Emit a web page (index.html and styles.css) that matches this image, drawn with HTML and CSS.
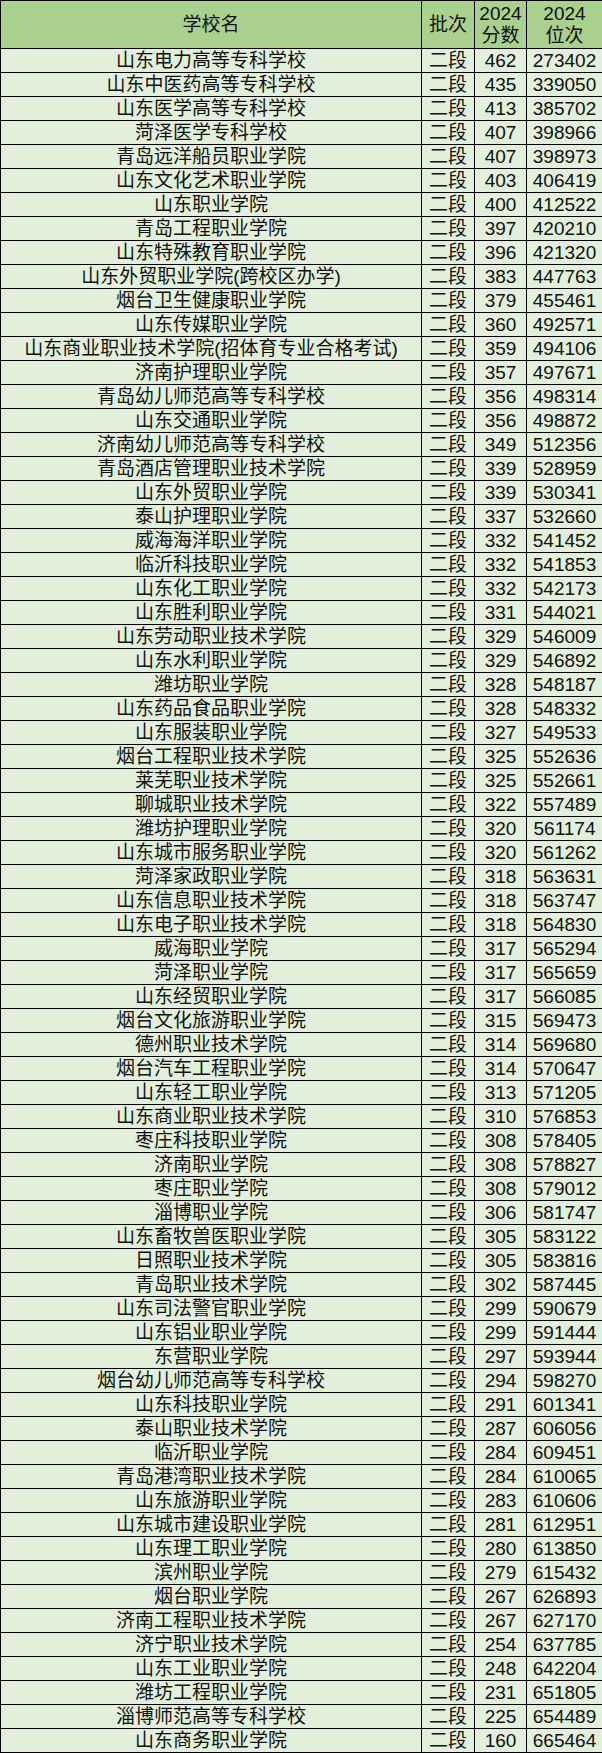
FILE: index.html
```html
<!DOCTYPE html>
<html lang="zh">
<head>
<meta charset="utf-8">
<link rel="stylesheet" href="styles.css">
</head>
<body>
<table class="tbl">
<colgroup><col class="c1"><col class="c2"><col class="c3"><col class="c4"></colgroup>
<thead>
<tr class="head"><th>学校名</th><th>批次</th><th>2024<br>分数</th><th>2024<br>位次</th></tr>
</thead>
<tbody>
<tr><td>山东电力高等专科学校</td><td>二段</td><td>462</td><td>273402</td></tr>
<tr><td>山东中医药高等专科学校</td><td>二段</td><td>435</td><td>339050</td></tr>
<tr><td>山东医学高等专科学校</td><td>二段</td><td>413</td><td>385702</td></tr>
<tr><td>菏泽医学专科学校</td><td>二段</td><td>407</td><td>398966</td></tr>
<tr><td>青岛远洋船员职业学院</td><td>二段</td><td>407</td><td>398973</td></tr>
<tr><td>山东文化艺术职业学院</td><td>二段</td><td>403</td><td>406419</td></tr>
<tr><td>山东职业学院</td><td>二段</td><td>400</td><td>412522</td></tr>
<tr><td>青岛工程职业学院</td><td>二段</td><td>397</td><td>420210</td></tr>
<tr><td>山东特殊教育职业学院</td><td>二段</td><td>396</td><td>421320</td></tr>
<tr><td>山东外贸职业学院(跨校区办学)</td><td>二段</td><td>383</td><td>447763</td></tr>
<tr><td>烟台卫生健康职业学院</td><td>二段</td><td>379</td><td>455461</td></tr>
<tr><td>山东传媒职业学院</td><td>二段</td><td>360</td><td>492571</td></tr>
<tr><td>山东商业职业技术学院(招体育专业合格考试)</td><td>二段</td><td>359</td><td>494106</td></tr>
<tr><td>济南护理职业学院</td><td>二段</td><td>357</td><td>497671</td></tr>
<tr><td>青岛幼儿师范高等专科学校</td><td>二段</td><td>356</td><td>498314</td></tr>
<tr><td>山东交通职业学院</td><td>二段</td><td>356</td><td>498872</td></tr>
<tr><td>济南幼儿师范高等专科学校</td><td>二段</td><td>349</td><td>512356</td></tr>
<tr><td>青岛酒店管理职业技术学院</td><td>二段</td><td>339</td><td>528959</td></tr>
<tr><td>山东外贸职业学院</td><td>二段</td><td>339</td><td>530341</td></tr>
<tr><td>泰山护理职业学院</td><td>二段</td><td>337</td><td>532660</td></tr>
<tr><td>威海海洋职业学院</td><td>二段</td><td>332</td><td>541452</td></tr>
<tr><td>临沂科技职业学院</td><td>二段</td><td>332</td><td>541853</td></tr>
<tr><td>山东化工职业学院</td><td>二段</td><td>332</td><td>542173</td></tr>
<tr><td>山东胜利职业学院</td><td>二段</td><td>331</td><td>544021</td></tr>
<tr><td>山东劳动职业技术学院</td><td>二段</td><td>329</td><td>546009</td></tr>
<tr><td>山东水利职业学院</td><td>二段</td><td>329</td><td>546892</td></tr>
<tr><td>潍坊职业学院</td><td>二段</td><td>328</td><td>548187</td></tr>
<tr><td>山东药品食品职业学院</td><td>二段</td><td>328</td><td>548332</td></tr>
<tr><td>山东服装职业学院</td><td>二段</td><td>327</td><td>549533</td></tr>
<tr><td>烟台工程职业技术学院</td><td>二段</td><td>325</td><td>552636</td></tr>
<tr><td>莱芜职业技术学院</td><td>二段</td><td>325</td><td>552661</td></tr>
<tr><td>聊城职业技术学院</td><td>二段</td><td>322</td><td>557489</td></tr>
<tr><td>潍坊护理职业学院</td><td>二段</td><td>320</td><td>561174</td></tr>
<tr><td>山东城市服务职业学院</td><td>二段</td><td>320</td><td>561262</td></tr>
<tr><td>菏泽家政职业学院</td><td>二段</td><td>318</td><td>563631</td></tr>
<tr><td>山东信息职业技术学院</td><td>二段</td><td>318</td><td>563747</td></tr>
<tr><td>山东电子职业技术学院</td><td>二段</td><td>318</td><td>564830</td></tr>
<tr><td>威海职业学院</td><td>二段</td><td>317</td><td>565294</td></tr>
<tr><td>菏泽职业学院</td><td>二段</td><td>317</td><td>565659</td></tr>
<tr><td>山东经贸职业学院</td><td>二段</td><td>317</td><td>566085</td></tr>
<tr><td>烟台文化旅游职业学院</td><td>二段</td><td>315</td><td>569473</td></tr>
<tr><td>德州职业技术学院</td><td>二段</td><td>314</td><td>569680</td></tr>
<tr><td>烟台汽车工程职业学院</td><td>二段</td><td>314</td><td>570647</td></tr>
<tr><td>山东轻工职业学院</td><td>二段</td><td>313</td><td>571205</td></tr>
<tr><td>山东商业职业技术学院</td><td>二段</td><td>310</td><td>576853</td></tr>
<tr><td>枣庄科技职业学院</td><td>二段</td><td>308</td><td>578405</td></tr>
<tr><td>济南职业学院</td><td>二段</td><td>308</td><td>578827</td></tr>
<tr><td>枣庄职业学院</td><td>二段</td><td>308</td><td>579012</td></tr>
<tr><td>淄博职业学院</td><td>二段</td><td>306</td><td>581747</td></tr>
<tr><td>山东畜牧兽医职业学院</td><td>二段</td><td>305</td><td>583122</td></tr>
<tr><td>日照职业技术学院</td><td>二段</td><td>305</td><td>583816</td></tr>
<tr><td>青岛职业技术学院</td><td>二段</td><td>302</td><td>587445</td></tr>
<tr><td>山东司法警官职业学院</td><td>二段</td><td>299</td><td>590679</td></tr>
<tr><td>山东铝业职业学院</td><td>二段</td><td>299</td><td>591444</td></tr>
<tr><td>东营职业学院</td><td>二段</td><td>297</td><td>593944</td></tr>
<tr><td>烟台幼儿师范高等专科学校</td><td>二段</td><td>294</td><td>598270</td></tr>
<tr><td>山东科技职业学院</td><td>二段</td><td>291</td><td>601341</td></tr>
<tr><td>泰山职业技术学院</td><td>二段</td><td>287</td><td>606056</td></tr>
<tr><td>临沂职业学院</td><td>二段</td><td>284</td><td>609451</td></tr>
<tr><td>青岛港湾职业技术学院</td><td>二段</td><td>284</td><td>610065</td></tr>
<tr><td>山东旅游职业学院</td><td>二段</td><td>283</td><td>610606</td></tr>
<tr><td>山东城市建设职业学院</td><td>二段</td><td>281</td><td>612951</td></tr>
<tr><td>山东理工职业学院</td><td>二段</td><td>280</td><td>613850</td></tr>
<tr><td>滨州职业学院</td><td>二段</td><td>279</td><td>615432</td></tr>
<tr><td>烟台职业学院</td><td>二段</td><td>267</td><td>626893</td></tr>
<tr><td>济南工程职业技术学院</td><td>二段</td><td>267</td><td>627170</td></tr>
<tr><td>济宁职业技术学院</td><td>二段</td><td>254</td><td>637785</td></tr>
<tr><td>山东工业职业学院</td><td>二段</td><td>248</td><td>642204</td></tr>
<tr><td>潍坊工程职业学院</td><td>二段</td><td>231</td><td>651805</td></tr>
<tr><td>淄博师范高等专科学校</td><td>二段</td><td>225</td><td>654489</td></tr>
<tr><td>山东商务职业学院</td><td>二段</td><td>160</td><td>665464</td></tr>
</tbody>
</table>
</body>
</html>
```
FILE: styles.css
```css
html, body {
  margin: 0;
  padding: 0;
  background: #ffffff;
}
.tbl {
  border-collapse: collapse;
  table-layout: fixed;
  width: 602px;
  font-family: "Liberation Sans", "Noto Sans CJK SC", sans-serif;
  font-size: 19px;
  color: #111;
}
.c1 { width: 421px; }
.c2 { width: 53px; }
.c3 { width: 52px; }
.c4 { width: 76px; }
.tbl th, .tbl td {
  border: 1px solid #000;
  padding: 0;
  text-align: center;
  vertical-align: middle;
  white-space: nowrap;
  overflow: hidden;
}
.tbl th {
  background: #a9d08e;
  font-weight: normal;
  height: 47px;
  line-height: 22px;
}
.tbl td {
  background: #e2efda;
  height: 23px;
  line-height: 22px;
}
```
